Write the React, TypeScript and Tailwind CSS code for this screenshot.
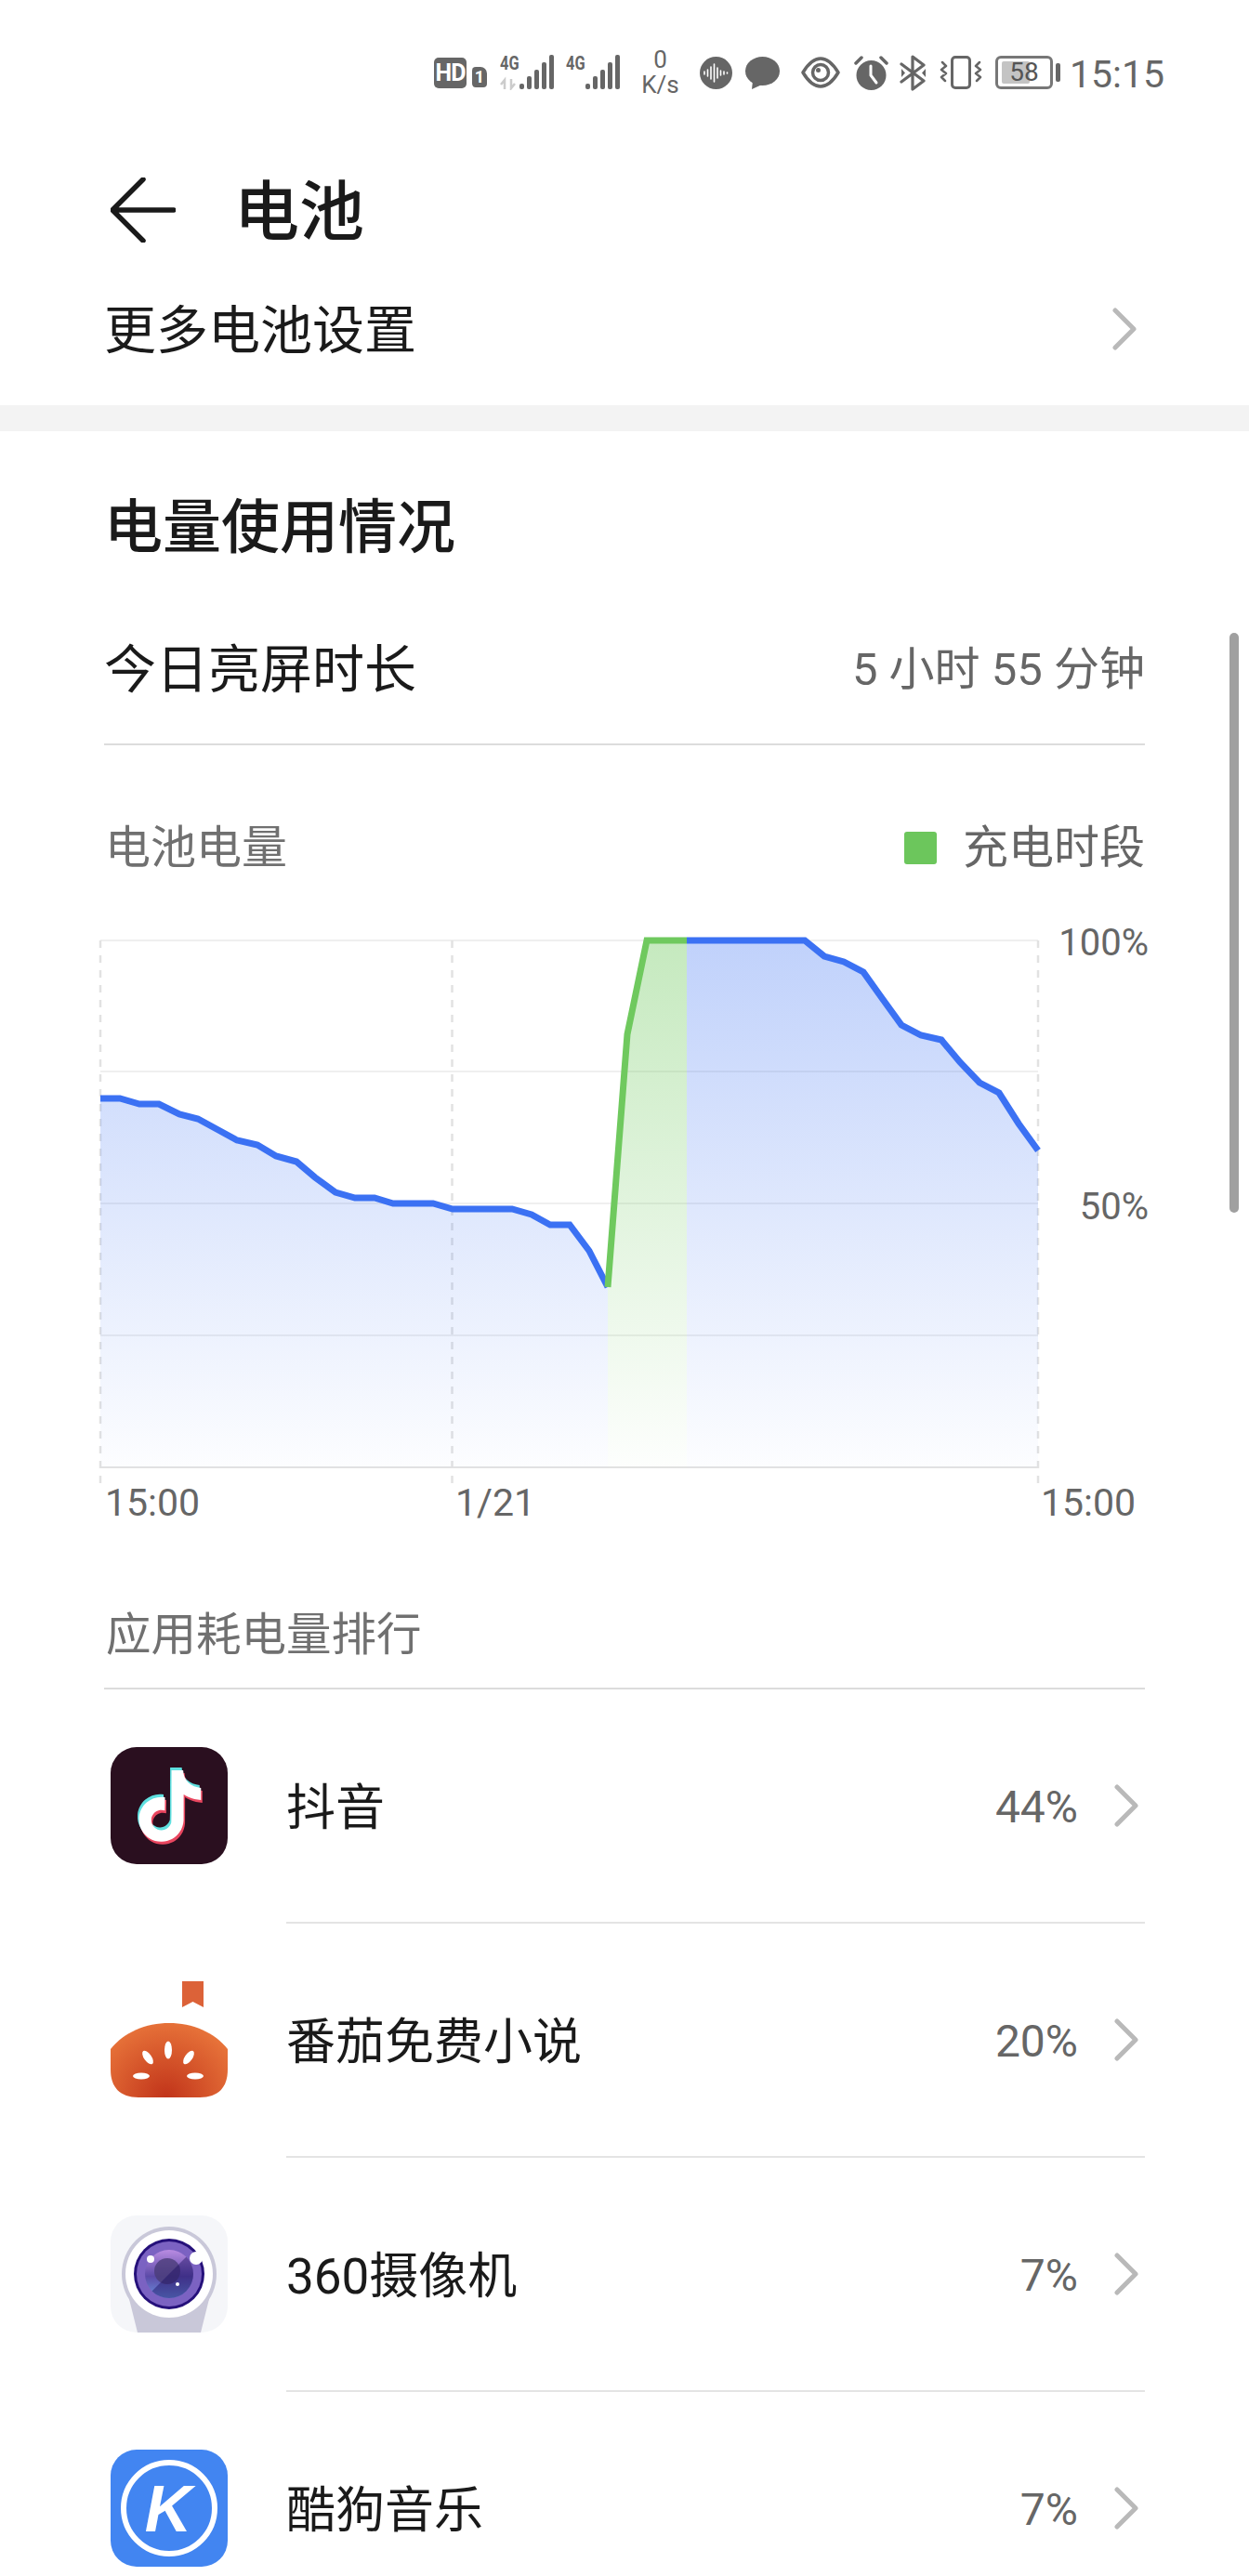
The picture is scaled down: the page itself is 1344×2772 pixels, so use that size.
import React from "react";

const fontStack = "font-[Roboto,'Noto_Sans_CJK_SC',sans-serif]";

// chart lines, traced in page pixels
const blueLeft: [number, number][] = [
  [108, 1182], [129, 1182], [150, 1188], [171, 1188], [193, 1199], [213, 1204], [235, 1216], [255, 1227],
  [277, 1232], [297, 1244], [319, 1250], [339, 1267], [361, 1283], [382, 1289], [403, 1289], [423, 1295],
  [466, 1295], [487, 1301], [551, 1301], [572, 1307], [592, 1318], [613, 1318], [634, 1346], [654, 1385],
];
const green: [number, number][] = [[654, 1385], [675, 1113], [696, 1012], [739, 1012]];
const blueRight: [number, number][] = [
  [739, 1012], [866, 1012], [887, 1029], [908, 1035], [929, 1046], [949, 1074], [970, 1103], [991, 1114],
  [1013, 1119], [1033, 1143], [1054, 1165], [1075, 1176], [1096, 1209], [1117, 1238],
];

const toPoints = (pts: [number, number][]) => pts.map((p) => p.join(",")).join(" ");
const toArea = (pts: [number, number][]) =>
  `${pts[0][0]},1579 ${toPoints(pts)} ${pts[pts.length - 1][0]},1579`;

const BatteryChart = () => (
  <svg className="block h-[615px] w-[1030px] shrink-0" viewBox="100 985 1030 615">
    <defs>
      <linearGradient id="blueFill" gradientUnits="userSpaceOnUse" x1="0" y1="1012" x2="0" y2="1585">
        <stop offset="0" stopColor="#3b71f3" stopOpacity="0.32" />
        <stop offset="1" stopColor="#3b71f3" stopOpacity="0.01" />
      </linearGradient>
      <linearGradient id="greenFill" gradientUnits="userSpaceOnUse" x1="0" y1="1012" x2="0" y2="1585">
        <stop offset="0" stopColor="#6fc95e" stopOpacity="0.4" />
        <stop offset="1" stopColor="#6fc95e" stopOpacity="0.01" />
      </linearGradient>
    </defs>
    {[1012, 1153, 1295, 1437].map((y) => (
      <line key={y} x1="108" x2="1117" y1={y} y2={y} stroke="#efefef" strokeWidth="2" />
    ))}
    <line x1="108" x2="1117" y1="1579" y2="1579" stroke="#e2e2e2" strokeWidth="2" />
    {[108, 486.5, 1117].map((x) => (
      <line key={x} x1={x} x2={x} y1="1012" y2="1600" stroke="#e2e2e2" strokeWidth="2.5" strokeDasharray="8 8" />
    ))}
    <polygon points={toArea(blueLeft)} fill="url(#blueFill)" />
    <polygon points={toArea(green)} fill="url(#greenFill)" />
    <polygon points={toArea(blueRight)} fill="url(#blueFill)" />
    <polyline points={toPoints(blueLeft)} fill="none" stroke="#3b71f3" strokeWidth="7" />
    <polyline points={toPoints(blueRight)} fill="none" stroke="#3b71f3" strokeWidth="7" />
    <polyline points={toPoints(green)} fill="none" stroke="#6fc95e" strokeWidth="7" />
  </svg>
);

const Chevron = () => (
  <svg className="h-[46px] w-[28px] shrink-0" viewBox="0 0 28 46" fill="none">
    <path d="M4 3 L24 23 L4 43" stroke="#b9b9b9" strokeWidth="5" strokeLinecap="round" strokeLinejoin="round" />
  </svg>
);

const NOTE =
  "M12.525.02c1.31-.02 2.61-.01 3.91-.02.08 1.53.63 3.09 1.75 4.17 1.12 1.11 2.7 1.62 4.24 1.79v4.03c-1.44-.05-2.89-.35-4.2-.97-.57-.26-1.1-.59-1.62-.93-.01 2.92.01 5.84-.02 8.75-.08 1.4-.54 2.79-1.35 3.94-1.31 1.92-3.58 3.17-5.91 3.21-1.43.08-2.86-.31-4.08-1.03-2.02-1.19-3.44-3.37-3.65-5.71-.02-.5-.03-1-.01-1.49.18-1.9 1.12-3.72 2.58-4.96 1.66-1.44 3.98-2.13 6.15-1.72.02 1.48-.04 2.96-.04 4.44-.99-.32-2.15-.23-3.02.37-.63.41-1.11 1.04-1.36 1.75-.21.51-.15 1.07-.14 1.61.24 1.64 1.82 3.02 3.5 2.87 1.12-.01 2.19-.66 2.77-1.61.19-.33.4-.67.41-1.06.1-1.79.06-3.57.07-5.36.01-4.03-.01-8.05.02-12.07z";

const DouyinIcon = () => (
  <svg className="h-[126px] w-[126px]" viewBox="0 0 126 126">
    <rect width="126" height="126" rx="28" fill="#2a0f1f" />
    <g transform="translate(24 22) scale(3.2)">
      <path d={NOTE} fill="#5fe0e0" />
    </g>
    <g transform="translate(27 28) scale(3.2)">
      <path d={NOTE} fill="#e9465f" />
    </g>
    <g transform="translate(25.500 25) scale(3.2)">
      <path d={NOTE} fill="#ffffff" />
    </g>
  </svg>
);

const TomatoIcon = () => (
  <svg className="h-[126px] w-[126px]" viewBox="0 0 126 126">
    <defs>
      <radialGradient id="tomato" gradientUnits="userSpaceOnUse" cx="60" cy="125" r="85">
        <stop offset="0" stopColor="#c1341a" />
        <stop offset="1" stopColor="#e8743a" />
      </radialGradient>
    </defs>
    <path d="M77 0 H100 V28 L88.5 22 L77 28 Z" fill="#dc6238" />
    <path d="M0 73 C14 55 38 45 63 45 C88 45 112 55 126 73 V95 C126 114 116 125 96 125 H30 C10 125 0 114 0 95 Z" fill="url(#tomato)" />
    <g fill="#ffffff">
      <ellipse cx="62" cy="74" rx="4" ry="9.500" />
      <ellipse cx="40" cy="82" rx="4" ry="8.500" transform="rotate(-35 40 82)" />
      <ellipse cx="84" cy="82" rx="4" ry="8.500" transform="rotate(35 84 82)" />
      <ellipse cx="33" cy="102" rx="9" ry="3.500" />
      <ellipse cx="91" cy="102" rx="9" ry="3.500" />
    </g>
  </svg>
);

const CameraIcon = () => (
  <svg className="h-[126px] w-[126px]" viewBox="0 0 126 126">
    <defs>
      <linearGradient id="lens" x1="0" y1="0" x2="0" y2="1">
        <stop offset="0" stopColor="#b98ce2" />
        <stop offset="0.55" stopColor="#5c4aa8" />
        <stop offset="1" stopColor="#6a90dc" />
      </linearGradient>
      <clipPath id="camClip">
        <rect width="126" height="126" rx="28" />
      </clipPath>
      <clipPath id="lensClip">
        <circle cx="63" cy="63" r="26" />
      </clipPath>
    </defs>
    <rect width="126" height="126" rx="28" fill="#f5f6f9" />
    <g clipPath="url(#camClip)">
      <path d="M20 90 L29 126 H97 L106 90 Z" fill="#c9c8d9" />
    </g>
    <circle cx="63" cy="63" r="51" fill="#c9c8d9" />
    <circle cx="63" cy="63" r="47" fill="#ffffff" />
    <circle cx="63" cy="63" r="38" fill="#25107a" />
    <circle cx="63" cy="63" r="35" fill="#7b62c2" />
    <circle cx="63" cy="63" r="26" fill="url(#lens)" />
    <circle cx="61" cy="60" r="14" fill="#4a3c78" opacity="0.8" />
    <g clipPath="url(#lensClip)">
      <path d="M36 90 L92 34 L96 96 Z" fill="#1d0f62" opacity="0.45" />
    </g>
    <circle cx="43" cy="47" r="4" fill="#ffffff" />
    <circle cx="92" cy="46" r="7" fill="#ffffff" />
    <circle cx="72" cy="74" r="2" fill="#ffffff" />
  </svg>
);

const KugouIcon = () => (
  <svg className="h-[126px] w-[126px]" viewBox="0 0 126 126">
    <rect width="126" height="126" rx="28" fill="#4285f1" />
    <circle cx="63" cy="63" r="49" fill="none" stroke="#ffffff" strokeWidth="6" />
    <text x="62" y="88" textAnchor="middle" fontFamily="'Liberation Sans', sans-serif" fontWeight="700" fontStyle="italic" fontSize="70" fill="#ffffff">
      K
    </text>
  </svg>
);

const apps = [
  { name: "抖音", pct: "44%", icon: <DouyinIcon /> },
  { name: "番茄免费小说", pct: "20%", icon: <TomatoIcon /> },
  { name: "360摄像机", pct: "7%", icon: <CameraIcon /> },
  { name: "酷狗音乐", pct: "7%", icon: <KugouIcon /> },
];

// signal bars with the 4G tag above them
const Signal = ({ withArrows }: { withArrows?: boolean }) => (
  <div className="relative h-[38px] w-[59px] shrink-0">
    <span className="absolute left-0 top-0 origin-left text-[21px] font-bold leading-[18px] text-[#666666] [transform:scaleX(0.78)]">4G</span>
    <svg className="absolute inset-0 h-[38px] w-[59px]" viewBox="0 0 59 38">
      {withArrows && (
        <path d="M5 37 V27 L1 32 M5 27 V37 M12 26 V36 L16 31" fill="none" stroke="#cccccc" strokeWidth="2.5" />
      )}
      <g fill="#666666">
        <rect x="21" y="31" width="5" height="6" rx="2" />
        <rect x="29" y="23" width="5" height="14" rx="2" />
        <rect x="37" y="16" width="5" height="21" rx="2" />
        <rect x="45" y="8" width="5" height="29" rx="2" />
        <rect x="53" y="0" width="5" height="37" rx="2" />
      </g>
    </svg>
  </div>
);

const StatusBar = () => (
  <div className="flex h-[156px] items-center pl-[467px] text-[#666666]">
    <div className="flex h-[33px] w-[35px] shrink-0 items-center justify-center rounded-[5px] bg-[#666666] text-[25px] font-bold leading-none tracking-[-1px] text-white">
      HD
    </div>
    <div className="ml-[6px] mt-[10px] flex h-[22px] w-[16px] shrink-0 items-center justify-center rounded-[4px] rounded-tr-[7px] bg-[#666666] text-[18px] font-bold leading-none text-white">
      1
    </div>
    <div className="ml-[14px]">
      <Signal withArrows />
    </div>
    <div className="ml-[12px]">
      <Signal />
    </div>
    <div className="ml-[23px] flex w-[39px] shrink-0 flex-col items-center text-[26px] leading-[27px]">
      <span>0</span>
      <span>K/s</span>
    </div>
    <svg className="ml-[23px] h-[35px] w-[35px] shrink-0" viewBox="0 0 35 35">
      <circle cx="17.5" cy="17.5" r="17.5" fill="#666666" />
      <g stroke="#ffffff" strokeWidth="1.6" strokeLinecap="round">
        <path d="M5 16V19M8.5 14V21M12 11V24M15.5 8V27M19 12V23M22.5 15V20M26 16V19M29.5 17V18" />
      </g>
    </svg>
    <svg className="ml-[14px] h-[35px] w-[37px] shrink-0" viewBox="0 0 37 35">
      <ellipse cx="18.5" cy="15.5" rx="18.5" ry="15.5" fill="#666666" />
      <path d="M8 26 L7 35 L18 30 Z" fill="#666666" />
    </svg>
    <svg className="ml-[23px] h-[34px] w-[42px] shrink-0" viewBox="0 0 42 34" fill="none">
      <path d="M2 17 C8 7 14 2 21 2 C28 2 34 7 40 17 C34 27 28 32 21 32 C14 32 8 27 2 17 Z" stroke="#666666" strokeWidth="3.5" strokeLinejoin="round" />
      <circle cx="21" cy="17" r="8.5" stroke="#666666" strokeWidth="3.5" />
      <circle cx="18.5" cy="14.5" r="2.5" fill="#666666" />
    </svg>
    <svg className="ml-[15px] h-[37px] w-[37px] shrink-0" viewBox="0 0 37 37" fill="none">
      <circle cx="18.5" cy="21" r="16" fill="#666666" />
      <path d="M18 11 V21 L24 29" stroke="#ffffff" strokeWidth="3" strokeLinecap="round" />
      <path d="M2 8 L8 2 M35 8 L29 2" stroke="#666666" strokeWidth="3.5" strokeLinecap="round" />
    </svg>
    <svg className="ml-[12px] h-[39px] w-[31px] shrink-0" viewBox="0 0 31 39" fill="none">
      <path d="M2 10 L26 28 L14 37 V2 L26 11 L2 29" stroke="#666666" strokeWidth="3.2" strokeLinejoin="round" strokeLinecap="round" />
      <path d="M2 15 L6 19.500 L2 24 Z M28 15 L24 19.500 L28 24 Z" fill="#666666" />
    </svg>
    <svg className="ml-[12px] h-[36px] w-[46px] shrink-0" viewBox="0 0 46 36" fill="none">
      <rect x="13.500" y="1.500" width="19" height="33" rx="3.500" stroke="#666666" strokeWidth="3" />
      <path d="M3 7 L7 11 L2 15 L7 19 L2 23 L6 27 M43 7 L39 11 L44 15 L39 19 L44 23 L40 27" stroke="#666666" strokeWidth="2.500" strokeLinejoin="round" strokeLinecap="round" />
    </svg>
    <div className="relative ml-[14px] flex h-[36px] w-[62px] shrink-0 items-center justify-center rounded-[6px] border-[3px] border-[#777777] text-[28px] leading-none text-[#555555]">
      <div className="absolute bottom-[3px] left-[4px] top-[3px] w-[30px] rounded-[2px] bg-[#c4c4c4]" />
      <span className="relative">58</span>
    </div>
    <div className="ml-[3px] h-[20px] w-[5px] shrink-0 rounded-[2px] bg-[#666666]" />
    <span className="ml-[10px] pt-[4px] text-[41px] leading-none">15:15</span>
  </div>
);

export default function App() {
  return (
    <div className={`relative h-[2772px] w-full overflow-hidden bg-white ${fontStack}`}>
      <StatusBar />

      <div className="flex h-[140px] items-center pl-[119px]">
        <svg className="h-[70px] w-[70px] shrink-0" viewBox="0 0 70 70" fill="none">
          <path d="M35 2 L2 35 L35 68 M2 35 H68" stroke="#1a1a1a" strokeWidth="5.5" strokeLinecap="round" strokeLinejoin="round" />
        </svg>
        <h1 className="ml-[63px] pt-[6px] text-[70px] font-medium leading-none text-[#1a1a1a]">电池</h1>
      </div>

      <div className="mx-[112px] mb-[24px] flex h-[116px] items-center justify-between">
        <span className="pt-[4px] text-[56px] leading-none text-[#1a1a1a]">更多电池设置</span>
        <span className="mr-[8px]">
          <Chevron />
        </span>
      </div>
      <div className="h-[28px] bg-[#f3f3f3]" />

      <div className="mx-[112px]">
        <h2 className="mt-[73px] h-[59px] text-[63px] font-medium leading-[62px] text-[#1a1a1a]">电量使用情况</h2>
        <div className="mt-[43px] flex h-[163px] items-center justify-between border-b-2 border-[#dcdcdc] pb-[2px]">
          <span className="pt-[4px] text-[56px] leading-none text-[#1a1a1a]">今日亮屏时长</span>
          <span className="pt-[4px] text-[49px] leading-none text-[#666666]">5 小时 55 分钟</span>
        </div>
        <div className="flex h-[183px] items-center justify-between pl-[1px] pt-[37px]">
          <span className="text-[49px] leading-none text-[#707070]">电池电量</span>
          <div className="flex items-center">
            <div className="h-[35px] w-[35px] rounded-[3px] bg-[#6cc65c]" />
            <span className="ml-[28px] text-[49px] leading-none text-[#666666]">充电时段</span>
          </div>
        </div>
      </div>

      <div className="flex pl-[100px]">
        <BatteryChart />
        <div className="flex w-[106px] flex-col items-end pt-[6px] text-[40px] leading-[48px] text-[#666666]">
          <span>100%</span>
          <span className="mt-[236px]">50%</span>
        </div>
      </div>

      <div className="flex h-[34px] items-center pl-[113px] text-[41px] leading-none text-[#666666]">
        <span className="w-[377px]">15:00</span>
        <span className="w-[630px]">1/21</span>
        <span>15:00</span>
      </div>

      <div className="mx-[112px] flex h-[184px] items-center border-b-2 border-[#dcdcdc] pl-[2px] pt-[70px]">
        <span className="text-[48.5px] leading-none text-[#707070]">应用耗电量排行</span>
      </div>

      {apps.map((app) => (
        <div key={app.name} className="flex h-[252px] items-center pl-[119px] pr-[112px]">
          <div className="mb-[2px] shrink-0">{app.icon}</div>
          <div className="ml-[63px] flex h-full flex-1 items-center justify-between border-b-2 border-[#e4e4e4]">
            <span className="pt-[6px] text-[53px] leading-none text-[#1a1a1a]">{app.name}</span>
            <div className="flex items-center">
              <span className="mr-[38px] pt-[4px] text-[48px] leading-none text-[#666666]">{app.pct}</span>
              <span className="mr-[6px]">
                <Chevron />
              </span>
            </div>
          </div>
        </div>
      ))}

      <div className="absolute right-[11px] top-[681px] h-[624px] w-[10px] rounded-full bg-[#a0a0a0]" />
    </div>
  );
}
